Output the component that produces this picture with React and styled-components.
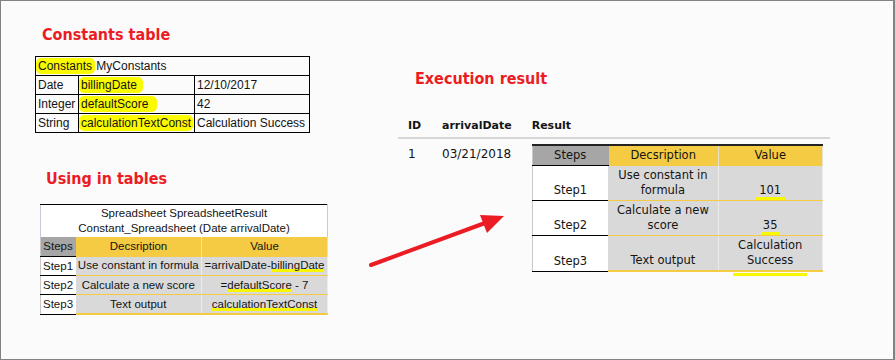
import React from "react";
import styled, { createGlobalStyle } from "styled-components";

const GlobalStyle = createGlobalStyle`
  html, body {
    margin: 0;
    padding: 0;
    background: #ffffff;
  }
`;

const Frame = styled.div`
  position: relative;
  box-sizing: border-box;
  width: 895px;
  height: 360px;
  display: flex;
  background: #fbfbfb;
  border: 1px solid #828282;
  border-right-width: 2px;
  font-family: "Liberation Sans", Arial, sans-serif;
  color: #141414;
`;

const LeftColumn = styled.div`
  width: 360px;
  display: flex;
  flex-direction: column;
  padding-top: 24px;
`;

const RightColumn = styled.div`
  display: flex;
  flex-direction: column;
  padding-top: 68px;
  padding-left: 37px;
`;

const Heading = styled.h2`
  margin: 0 0 ${(p) => p.$gap}px ${(p) => p.$indent}px;
  font-family: "DejaVu Sans Condensed", "DejaVu Sans", sans-serif;
  font-weight: bold;
  font-size: 16px;
  line-height: 20px;
  color: #ec1c24;
`;

const ConstTable = styled.table`
  margin-left: ${(p) => p.$indent}px;
  width: 274px;
  table-layout: fixed;
  border-collapse: collapse;
  font-size: 12px;
  line-height: 14px;
  margin-bottom: 36px;

  td {
    border: 1px solid #000;
    height: 18px;
    padding: 0 2px;
    white-space: nowrap;
    overflow: visible;
  }
`;

const Marker = styled.span`
  background: #fbfb00;
  border-radius: 5px;
  padding: 1px ${(p) => p.$extra || 2}px 1px 2px;
  margin: 0 -2px;
`;

const SheetTable = styled.table`
  margin-left: ${(p) => p.$indent}px;
  width: ${(p) => p.$width}px;
  border-collapse: collapse;
  font-size: 11.5px;
  line-height: 15px;
  table-layout: fixed;
`;

const TitleCell = styled.td`
  text-align: center;
  padding: 1px 0 1px;
  background: #ffffff;
  border-top: 1px solid #000;
  border-left: 1px solid #c9c9dc;
  border-right: 1px solid #c9c9dc;
`;

const HeadCell = styled.td`
  height: ${(p) => p.$h || 19}px;
  padding: 0;
  text-align: center;
  background: ${(p) => (p.$tone === "gray" ? "#a6a6a6" : "#f5cb43")};
  border-top: ${(p) => (p.$topLine ? "2px solid #222" : "none")};
  border-bottom: ${(p) => (p.$tone === "gray" ? "1px solid #000" : "none")};
  border-right: 1px solid ${(p) => (p.$tone === "gray" ? "#a6a6a6" : "#e6e0c8")};
  border-left: ${(p) => (p.$tone === "gray" ? "1px solid #c8c8c8" : "none")};
`;

const StepCell = styled.td`
  height: ${(p) => p.$h || 18}px;
  padding: 0 0 ${(p) => (p.$tall ? 2 : 0)}px ${(p) => (p.$center ? 0 : 2)}px;
  text-align: ${(p) => (p.$center ? "center" : "left")};
  vertical-align: ${(p) => (p.$tall ? "bottom" : "middle")};
  background: #ffffff;
  border-left: 1px solid #c8c8c8;
  border-bottom: 1px solid #000;
`;

const DataCell = styled.td`
  height: ${(p) => p.$h || 18}px;
  padding: 0 ${(p) => (p.$tall ? 8 : 0)}px ${(p) => (p.$tall ? 2 : 0)}px;
  text-align: center;
  vertical-align: ${(p) => (p.$tall ? "bottom" : "middle")};
  white-space: ${(p) => (p.$tall ? "normal" : "nowrap")};
  background: #d9d9d9;
  border-bottom: ${(p) => (p.$last ? 2 : 1)}px solid #f5cb43;
  border-right: 1px solid #ebebeb;
`;

const Underline = styled.span`
  padding: 0 ${(p) => p.$pad || 0}px ${(p) => p.$drop || 1}px;
  margin: 0 -${(p) => p.$pad || 0}px;
  background: linear-gradient(#f8f800, #f8f800) left bottom / 100% 3px no-repeat;
`;

const ResultTable = styled.table`
  width: 432px;
  border-collapse: collapse;
  font-family: "DejaVu Sans", Verdana, sans-serif;

  th {
    font-size: 11px;
    font-weight: bold;
    text-align: left;
    padding: 0 10px 5px;
    height: 19px;
    vertical-align: bottom;
    border-bottom: 2px solid #d6d6d6;
  }
`;

const ResultCell = styled.td`
  font-size: 12px;
  line-height: 15px;
  vertical-align: top;
  padding: ${(p) => (p.$nested ? "5px 0 0 10px" : "8px 10px 0")};
`;

const ArrowSvg = styled.svg`
  position: absolute;
  left: 360px;
  top: 205px;
  width: 150px;
  height: 70px;
  pointer-events: none;
`;

const constants = [
  { type: "Date", name: "billingDate", value: "12/10/2017", extra: 6 },
  { type: "Integer", name: "defaultScore", value: "42", extra: 9 },
  { type: "String", name: "calculationTextConst", value: "Calculation Success", extra: 2 },
];

const Arrow = () => (
  <ArrowSvg viewBox="0 0 150 70">
    <line x1="10" y1="59" x2="124" y2="17" stroke="#ec1c24" strokeWidth="4" strokeLinecap="round" />
    <polygon points="143,10 119,9 126,27" fill="#ec1c24" />
  </ArrowSvg>
);

const App = () => {
  return (
    <>
      <GlobalStyle />
      <Frame>
        <LeftColumn>
          <Heading $indent={41} $gap={11}>Constants table</Heading>
          <ConstTable $indent={34}>
            <colgroup>
              <col style={{ width: 43 }} />
              <col style={{ width: 116 }} />
              <col style={{ width: 115 }} />
            </colgroup>
            <tbody>
              <tr>
                <td colSpan={3}>
                  <Marker $extra={3}>Constants</Marker> MyConstants
                </td>
              </tr>
              {constants.map((c) => (
                <tr key={c.name}>
                  <td>{c.type}</td>
                  <td>
                    <Marker $extra={c.extra}>{c.name}</Marker>
                  </td>
                  <td>{c.value}</td>
                </tr>
              ))}
            </tbody>
          </ConstTable>

          <Heading $indent={45} $gap={15}>Using in tables</Heading>
          <SheetTable $indent={39} $width={287}>
            <colgroup>
              <col style={{ width: 35 }} />
              <col style={{ width: 126 }} />
              <col style={{ width: 126 }} />
            </colgroup>
            <tbody>
              <tr>
                <TitleCell colSpan={3}>
                  Spreadsheet SpreadsheetResult
                  <br />
                  Constant_Spreadsheet (Date arrivalDate)
                </TitleCell>
              </tr>
              <tr>
                <HeadCell $tone="gray">Steps</HeadCell>
                <HeadCell>Decsription</HeadCell>
                <HeadCell>Value</HeadCell>
              </tr>
              <tr>
                <StepCell>Step1</StepCell>
                <DataCell>Use constant in formula</DataCell>
                <DataCell>
                  =arrivalDate-<Underline>billingDate</Underline>
                </DataCell>
              </tr>
              <tr>
                <StepCell>Step2</StepCell>
                <DataCell>Calculate a new score</DataCell>
                <DataCell>
                  =<Underline>defaultScore</Underline> - 7
                </DataCell>
              </tr>
              <tr>
                <StepCell>Step3</StepCell>
                <DataCell $last>Text output</DataCell>
                <DataCell $last>
                  <Underline>calculationTextConst</Underline>
                </DataCell>
              </tr>
            </tbody>
          </SheetTable>
        </LeftColumn>

        <RightColumn>
          <Heading $indent={17} $gap={24}>Execution result</Heading>
          <ResultTable>
            <thead>
              <tr>
                <th style={{ width: 14 }}>ID</th>
                <th style={{ width: 69 }}>arrivalDate</th>
                <th>Result</th>
              </tr>
            </thead>
            <tbody>
              <tr>
                <ResultCell>1</ResultCell>
                <ResultCell>03/21/2018</ResultCell>
                <ResultCell $nested>
                  <SheetTable $indent={0} $width={290}>
                    <colgroup>
                      <col style={{ width: 76 }} />
                      <col style={{ width: 110 }} />
                      <col style={{ width: 104 }} />
                    </colgroup>
                    <tbody>
                      <tr>
                        <HeadCell $tone="gray" $topLine>Steps</HeadCell>
                        <HeadCell $topLine>Decsription</HeadCell>
                        <HeadCell $topLine>Value</HeadCell>
                      </tr>
                      <tr>
                        <StepCell $center $tall $h={32}>Step1</StepCell>
                        <DataCell $tall $h={32}>Use constant in formula</DataCell>
                        <DataCell $tall $h={32}>
                          <Underline $pad={4} $drop={3}>101</Underline>
                        </DataCell>
                      </tr>
                      <tr>
                        <StepCell $center $tall $h={32}>Step2</StepCell>
                        <DataCell $tall $h={32}>Calculate a new score</DataCell>
                        <DataCell $tall $h={32}>
                          <Underline $pad={2} $drop={3}>35</Underline>
                        </DataCell>
                      </tr>
                      <tr>
                        <StepCell $center $tall $h={32}>Step3</StepCell>
                        <DataCell $tall $last $h={32}>Text output</DataCell>
                        <DataCell $tall $last $h={32}>
                          Calculation
                          <br />
                          <Underline $pad={14} $drop={9}>Success</Underline>
                        </DataCell>
                      </tr>
                    </tbody>
                  </SheetTable>
                </ResultCell>
              </tr>
            </tbody>
          </ResultTable>
        </RightColumn>
        <Arrow />
      </Frame>
    </>
  );
};

export default App;
